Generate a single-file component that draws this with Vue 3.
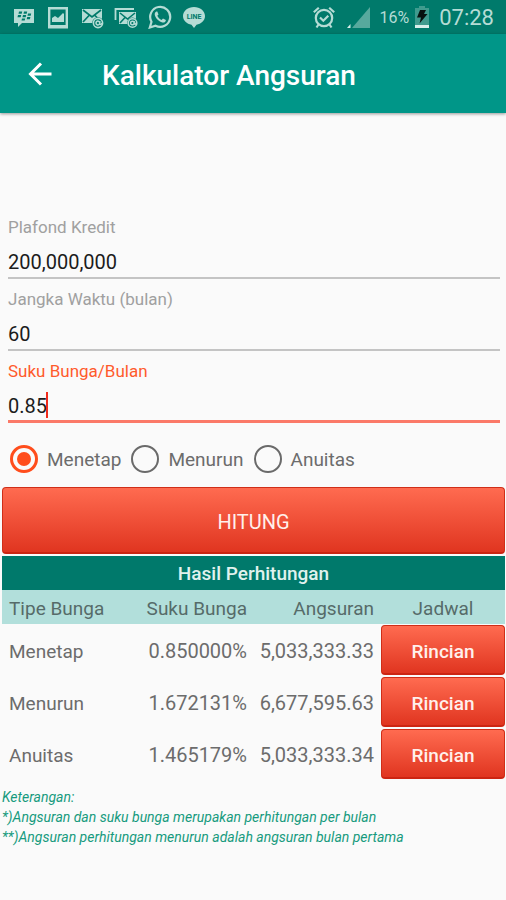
<script setup>
import { ref } from 'vue'

const fields = ref([
  { id: 'plafond', label: 'Plafond Kredit', value: '200,000,000', active: false },
  { id: 'jangka', label: 'Jangka Waktu (bulan)', value: '60', active: false },
  { id: 'bunga', label: 'Suku Bunga/Bulan', value: '0.85', active: true }
])
const types = ['Menetap', 'Menurun', 'Anuitas']
const selected = ref('Menetap')
const rows = [
  { type: 'Menetap', rate: '0.850000%', amount: '5,033,333.33' },
  { type: 'Menurun', rate: '1.672131%', amount: '6,677,595.63' },
  { type: 'Anuitas', rate: '1.465179%', amount: '5,033,333.34' }
]
</script>

<template>
  <div class="screen">
    <div class="status">
      <div class="group notifications">
        <svg class="icon" viewBox="0 0 24 24">
          <path fill="#b5dcd5" d="M2 4h20v14H10l-4 4v-4H2z" />
          <g fill="#007a6b">
            <path d="M7 6.5h3.2l-.5 2.2H6.5zM12 6.5h3.2l-.5 2.2h-3.2zM6 10h3.2l-.5 2.2H5.5zM11 10h3.2l-.5 2.2h-3.2zM16 8.5h3.2l-.5 2.2h-3.2zM10 13.4h3.2l-.5 2.2H9.5zM15.2 12h3.2l-.5 2.2h-3.2z" />
          </g>
        </svg>
        <svg class="icon" viewBox="0 0 24 24">
          <path fill="none" stroke="#b5dcd5" stroke-width="2.4" d="M3.200 3.200h17.600v19H3.200z" />
          <path fill="#b5dcd5" d="M6 17v-4l3-2 3 2 5-5 1 1v8zM3 20h18v2H3z" />
        </svg>
        <svg class="icon" viewBox="0 0 24 24">
          <path fill="#b5dcd5" d="M2 4h20v14H2z" />
          <path fill="none" stroke="#007a6b" stroke-width="1.7" d="M3 5l9 7 9-7M3 17l6-6.5M15 10.500l4 4" />
          <circle cx="18" cy="18" r="5.800" fill="#007a6b" />
          <circle cx="18" cy="18" r="4.600" fill="none" stroke="#b5dcd5" stroke-width="1.6" />
          <path fill="none" stroke="#b5dcd5" stroke-width="1.5" d="M19.800 16v3.200q1.400 1 2.200-1.200M19.800 18a1.900 1.900 0 1 1-.1-.6" />
        </svg>
        <svg class="icon" viewBox="0 0 24 24">
          <path fill="none" stroke="#b5dcd5" stroke-width="1.8" d="M1.500 15V4H20" />
          <path fill="#b5dcd5" d="M5 7h17v12H5z" />
          <path fill="none" stroke="#007a6b" stroke-width="1.600" d="M6 8l7.500 6L21 8M6 18l5-5.500" />
          <circle cx="18.500" cy="18" r="5.400" fill="#007a6b" />
          <circle cx="18.500" cy="18" r="4.300" fill="none" stroke="#b5dcd5" stroke-width="1.6" />
          <path fill="none" stroke="#b5dcd5" stroke-width="1.5" d="M20.200 16v3q1.300 1 2-1.200M20.200 18a1.800 1.800 0 1 1-.1-.6" />
        </svg>
        <svg class="icon" viewBox="0 0 24 24">
          <path fill="none" stroke="#b5dcd5" stroke-width="2.200" d="M1.800 22.500l1.700-5.700a10 10 0 1 1 4 3.900z" />
          <path fill="#b5dcd5" d="M8.400 6.500c-1.700.8-2 2.700-1.300 4.500 1.200 3 4 5.600 7.200 6.500 1.900.4 3.500-.8 3.600-2.600l-2.900-1.500-1.400 1.500c-2-.8-3.500-2.200-4.300-4.100l1.200-1.400-1.200-2.900z" />
        </svg>
        <svg class="icon" viewBox="0 0 24 24">
          <path fill="#b5dcd5" d="M12 2C6 2 1 5.900 1 11c0 4.500 3.800 8 8.500 8.700L12 23l2.500-3.300C19.200 19 23 15.500 23 11c0-5.100-5-9-11-9z" />
          <text x="12" y="13.500" text-anchor="middle" font-size="7" font-weight="700" fill="#007a6b">LINE</text>
        </svg>
      </div>
      <div class="group system">
        <svg class="icon" viewBox="0 0 24 24">
          <g fill="none" stroke="#b5dcd5" stroke-width="2.200">
            <circle cx="12" cy="13" r="8.200" />
            <path d="M1.800 7.200l5-4.500M22.200 7.200l-5-4.500M8 12.500l3.300 3.200 5-5M6.500 19.500l-2 3M17.500 19.500l2 3" />
          </g>
        </svg>
        <svg class="icon" viewBox="0 0 24 24">
          <path fill="#57a99d" d="M24 2v21H6z" />
          <path fill="#d8efeb" d="M4.500 19v4H1z" />
        </svg>
        <span class="percent">16%</span>
        <svg class="battery" viewBox="0 0 14 24">
          <path fill="#3f9b8e" d="M4 1h6v2h4v20H0V3h4z" />
          <path fill="#d8efeb" d="M0 20h14v3H0z" />
          <path fill="#07120f" d="M5 5h6l-2 4h3.500L4.500 18.500l1.500-6H2z" />
        </svg>
        <span class="clock">07:28</span>
      </div>
    </div>

    <header class="appbar">
      <button class="back" type="button" aria-label="Kembali">
        <svg viewBox="0 0 24 24">
          <path fill="none" stroke="#fff" stroke-width="3" d="M23.500 12H3M13 1.500L2.500 12 13 22.500" />
        </svg>
      </button>
      <h1>Kalkulator Angsuran</h1>
    </header>

    <main>
      <form @submit.prevent>
        <div class="fields">
          <div v-for="f in fields" :key="f.id" class="field" :class="{ active: f.active }">
            <label :for="f.id">{{ f.label }}</label>
            <input :id="f.id" v-model="f.value" type="text" inputmode="decimal" />
            <span v-if="f.active" class="caret"></span>
          </div>
        </div>

        <div class="radios">
          <label v-for="t in types" :key="t">
            <input v-model="selected" type="radio" name="tipe" :value="t" />
            <span>{{ t }}</span>
          </label>
        </div>

        <button class="red submit" type="submit">HITUNG</button>
      </form>

      <table>
        <caption>Hasil Perhitungan</caption>
        <thead>
          <tr>
            <th class="type">Tipe Bunga</th>
            <th class="rate">Suku Bunga</th>
            <th class="amount">Angsuran</th>
            <th class="detail">Jadwal</th>
          </tr>
        </thead>
        <tbody>
          <tr v-for="r in rows" :key="r.type">
            <td class="type">{{ r.type }}</td>
            <td class="rate">{{ r.rate }}</td>
            <td class="amount">{{ r.amount }}</td>
            <td class="action"><button class="red" type="button">Rincian</button></td>
          </tr>
        </tbody>
      </table>

      <div class="notes">
        <p>Keterangan:</p>
        <p>*)Angsuran dan suku bunga merupakan perhitungan per bulan</p>
        <p>**)Angsuran perhitungan menurun adalah angsuran bulan pertama</p>
      </div>
    </main>
  </div>
</template>

<style>
body {
  margin: 0;
  background: #fafafa;
}
</style>

<style scoped>
.screen {
  min-height: 100vh;
  background: #fafafa;
  color: #6c6c6c;
  font-family: Roboto, "Liberation Sans", sans-serif;
  font-size: 20px;
}
.screen * {
  box-sizing: border-box;
}
button,
input {
  font: inherit;
}
.status {
  display: flex;
  justify-content: space-between;
  align-items: center;
  height: 34px;
  padding: 0 12px;
  background: #007a6b;
  color: #b5dcd5;
}
.group {
  display: flex;
  align-items: center;
  gap: 10px;
}
.icon {
  width: 24px;
  height: 24px;
}
.percent {
  font-size: 16px;
}
.battery {
  width: 14px;
  height: 24px;
  margin-left: -4px;
}
.clock {
  font-size: 22px;
}
.appbar {
  display: flex;
  align-items: center;
  height: 79px;
  padding: 0 28px;
  gap: 50px;
  background: #009688;
  box-shadow: 0 1px 3px rgba(0, 0, 0, 0.4);
}
.back {
  width: 24px;
  height: 24px;
  padding: 0;
  border: 0;
  background: none;
}
.back svg {
  display: block;
}
h1 {
  margin: 0;
  padding-top: 4px;
  color: #fff;
  font-size: 28px;
  font-weight: 500;
}
main {
  padding: 102px 1px 0 2px;
}
.fields {
  display: grid;
  gap: 8px;
  padding: 0 5px 0 6px;
}
.field {
  position: relative;
  display: flex;
  flex-direction: column;
}
.field label {
  color: #a0a0a0;
  font-size: 17px;
  line-height: 24px;
}
.field input {
  width: 100%;
  height: 40px;
  padding: 8px 0 0;
  border: 0;
  border-bottom: 2px solid #c4c4c4;
  border-radius: 0;
  outline: 0;
  background: none;
  color: #1c1c1c;
}
.field.active label {
  color: #ff5a2c;
}
.field.active input {
  border-bottom: 3px solid #fb7968;
}
.caret {
  position: absolute;
  left: 38px;
  bottom: 5px;
  width: 2px;
  height: 26px;
  background: #f02c1c;
}
.radios {
  display: flex;
  align-items: center;
  gap: 10px;
  height: 64px;
  padding: 8px 8px 0;
  font-size: 19px;
}
.radios label {
  display: flex;
  align-items: center;
  gap: 9px;
}
.radios input {
  display: grid;
  place-items: center;
  width: 28px;
  height: 28px;
  margin: 0;
  border: 2px solid #6a6a6a;
  border-radius: 50%;
  appearance: none;
}
.radios input:checked {
  border: 3px solid #ff4d1c;
}
.radios input:checked::before {
  content: "";
  width: 14px;
  height: 14px;
  border-radius: 50%;
  background: #ff4d1c;
}
.red {
  display: block;
  width: 100%;
  border: 1px solid #cf2e18;
  border-bottom: 2px solid #cc2512;
  border-radius: 4px;
  background: linear-gradient(#ff6b50, #e03520);
  color: #fff0ec;
}
.submit {
  height: 67px;
  margin-bottom: 2px;
  padding: 4px 0 0;
}
table {
  width: 100%;
  border-collapse: collapse;
  table-layout: fixed;
}
caption {
  height: 34px;
  background: #00796b;
  color: #e0f2ee;
  font-size: 19px;
  font-weight: 500;
  line-height: 36px;
}
th {
  height: 34px;
  padding: 2px 7px 0;
  background: #b2dfdb;
  color: #566b69;
  font-size: 19px;
  font-weight: 400;
}
td {
  height: 52px;
  padding: 2px 7px 0;
}
.type {
  font-size: 19px;
  text-align: left;
}
.rate {
  width: 120px;
  text-align: right;
}
.amount {
  width: 127px;
  text-align: right;
}
.rate,
.amount {
  padding-left: 0;
}
.detail {
  width: 124px;
  text-align: center;
}
td.action {
  padding: 0;
}
.action .red {
  height: 50px;
  padding: 4px 0 0;
  font-size: 19px;
  font-weight: 500;
}
.notes {
  padding-top: 7px;
  color: #179a7e;
  font-size: 14px;
  font-style: italic;
  line-height: 20px;
}
.notes p {
  margin: 0;
}
</style>
